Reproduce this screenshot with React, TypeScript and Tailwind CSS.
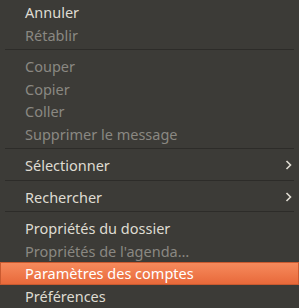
import { Fragment } from "react";

type Entry =
  | { kind: "item"; label: string; disabled?: boolean; active?: boolean; submenu?: boolean }
  | { kind: "sep" };

const entries: Entry[] = [
  { kind: "item", label: "Annuler" },
  { kind: "item", label: "Rétablir", disabled: true },
  { kind: "sep" },
  { kind: "item", label: "Couper", disabled: true },
  { kind: "item", label: "Copier", disabled: true },
  { kind: "item", label: "Coller", disabled: true },
  { kind: "item", label: "Supprimer le message", disabled: true },
  { kind: "sep" },
  { kind: "item", label: "Sélectionner", submenu: true },
  { kind: "sep" },
  { kind: "item", label: "Rechercher", submenu: true },
  { kind: "sep" },
  { kind: "item", label: "Propriétés du dossier" },
  { kind: "item", label: "Propriétés de l'agenda…", disabled: true },
  { kind: "item", label: "Paramètres des comptes", active: true },
  { kind: "item", label: "Préférences" },
];

function Chevron() {
  return (
    <svg width="7" height="10" viewBox="0 0 7 10" className="text-[#dfdbd2]">
      <path d="M1.5 1 L5.5 5 L1.5 9" fill="none" stroke="currentColor" strokeWidth="1.6" />
    </svg>
  );
}

export default function App() {
  return (
    <div
      className="w-[299px] h-[308px] overflow-hidden bg-[#3c3b37] pt-px text-[14.5px]"
      style={{ fontFamily: '"Noto Sans", "DejaVu Sans", sans-serif' }}
    >
      {entries.map((e, i) => (
        <Fragment key={i}>
          {e.kind === "sep" ? (
            <div className="h-[9px] pt-[3px] px-[5px]">
              <div className="h-px bg-[#2d2c29]" />
            </div>
          ) : (
            <div
              className={
                "h-[22.5px] flex items-center pl-[25px] pr-[7px] leading-none " +
                (e.active
                  ? "bg-gradient-to-b from-[#f68a5c] to-[#e8693a] border border-[#c95a30] text-white"
                  : e.disabled
                  ? "text-[#8a8882]"
                  : "text-[#dfdbd2]")
              }
            >
              <span className={e.active ? "-ml-px flex-1" : "flex-1"}>{e.label}</span>
              {e.submenu && <Chevron />}
            </div>
          )}
        </Fragment>
      ))}
    </div>
  );
}
